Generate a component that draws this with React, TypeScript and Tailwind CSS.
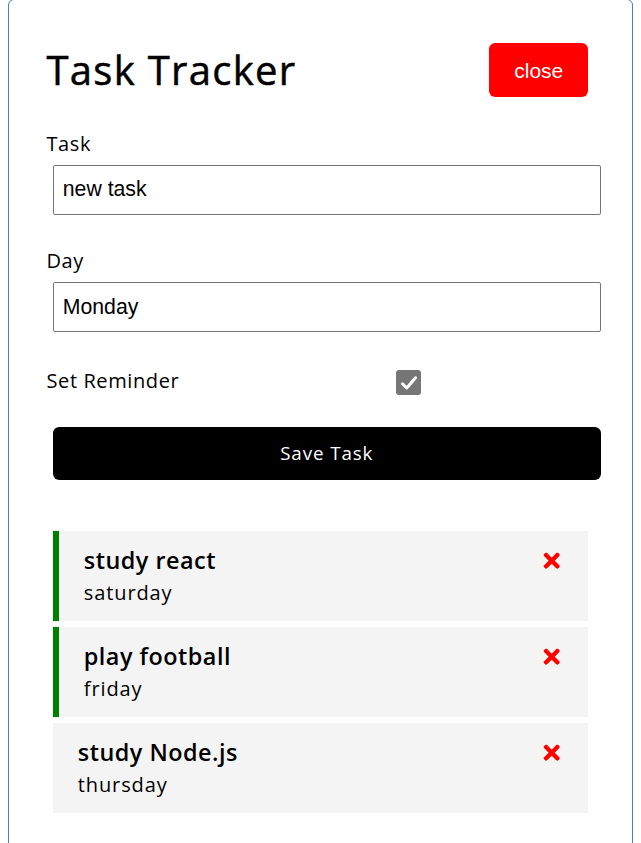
import { FaTimes } from 'react-icons/fa'

type Task = {
  id: number
  text: string
  day: string
  reminder: boolean
}

const TASKS: Task[] = [
  { id: 1, text: 'study react', day: 'saturday', reminder: true },
  { id: 2, text: 'play football', day: 'friday', reminder: true },
  { id: 3, text: 'study Node.js', day: 'thursday', reminder: false },
]

function TaskItem({ task }: { task: Task }) {
  return (
    <div
      className={`mx-[6.25px] bg-[#f4f4f4] px-[25px] py-[12.5px] ${
        task.reminder ? 'border-l-[6.25px] border-[#008000]' : ''
      }`}
    >
      <h3 className="flex items-center justify-between text-[23.4px] font-semibold leading-[35px] tracking-[0.5px]">
        {task.text}
        <FaTimes className="text-[#ff0000]" />
      </h3>
      <p className="text-[20px] leading-[30px] tracking-[0.9px]">{task.day}</p>
    </div>
  )
}

export default function App() {
  return (
    <div className="min-h-screen bg-white font-['Open_Sans',sans-serif] text-black">
      <div className="mx-auto -mt-[1.5px] min-h-[900px] max-w-[625px] rounded-[6px] border border-[#4682b4] p-[37.5px]">
        {/* Header */}
        <div className="mb-[25px] flex items-center justify-between">
          <h1 className="text-[40px] font-medium leading-[60px] tracking-[1.3px] [-webkit-text-stroke:0.5px_black]">
            Task Tracker
          </h1>
          <button className="m-[6.25px] h-[54px] w-[99px] rounded-[6.25px] bg-[#ff0000] font-['Liberation_Sans',sans-serif] text-[21px] text-white">
            close
          </button>
        </div>

        {/* Add form */}
        <form className="text-[20px] leading-[30px] tracking-[0.6px]">
          <div>
            <label className="block">Task</label>
            <input
              readOnly
              value="new task"
              className="mx-[6.25px] mt-[6.25px] block h-[50px] w-full rounded-[2px] border border-[#767676] px-[9px] font-['Liberation_Sans',sans-serif] text-[21.25px] tracking-normal outline-none"
            />
          </div>
          <div className="mt-[31.25px]">
            <label className="block">Day</label>
            <input
              readOnly
              value="Monday"
              className="mx-[6.25px] mt-[6.25px] block h-[50px] w-full rounded-[2px] border border-[#767676] px-[9px] font-['Liberation_Sans',sans-serif] text-[21.25px] tracking-normal outline-none"
            />
          </div>
          <div className="mt-[31.25px] flex h-[31px] items-start">
            <label className="flex-1 pt-[2px]">Set Reminder</label>
            <div className="flex flex-[2] justify-center pr-[5px] pt-[6.5px]">
              <span className="flex h-[25px] w-[25px] items-center justify-center rounded-[3px] bg-[#767676]">
                <svg width="20" height="20" viewBox="0 0 16 16" fill="none">
                  <path
                    d="M2.8 8.6l3.4 3.4 7-8.2"
                    stroke="white"
                    strokeWidth="2.4"
                    strokeLinecap="round"
                    strokeLinejoin="round"
                  />
                </svg>
              </span>
            </div>
          </div>
          <button
            type="button"
            className="mx-[6.25px] mt-[32px] block h-[53px] w-full rounded-[6.25px] bg-black text-[18.75px] tracking-[0.9px] text-white"
          >
            Save Task
          </button>
        </form>

        {/* Task list */}
        <div className="mt-[51px] flex flex-col gap-[6px]">
          {TASKS.map((t) => (
            <TaskItem key={t.id} task={t} />
          ))}
        </div>
      </div>
    </div>
  )
}
